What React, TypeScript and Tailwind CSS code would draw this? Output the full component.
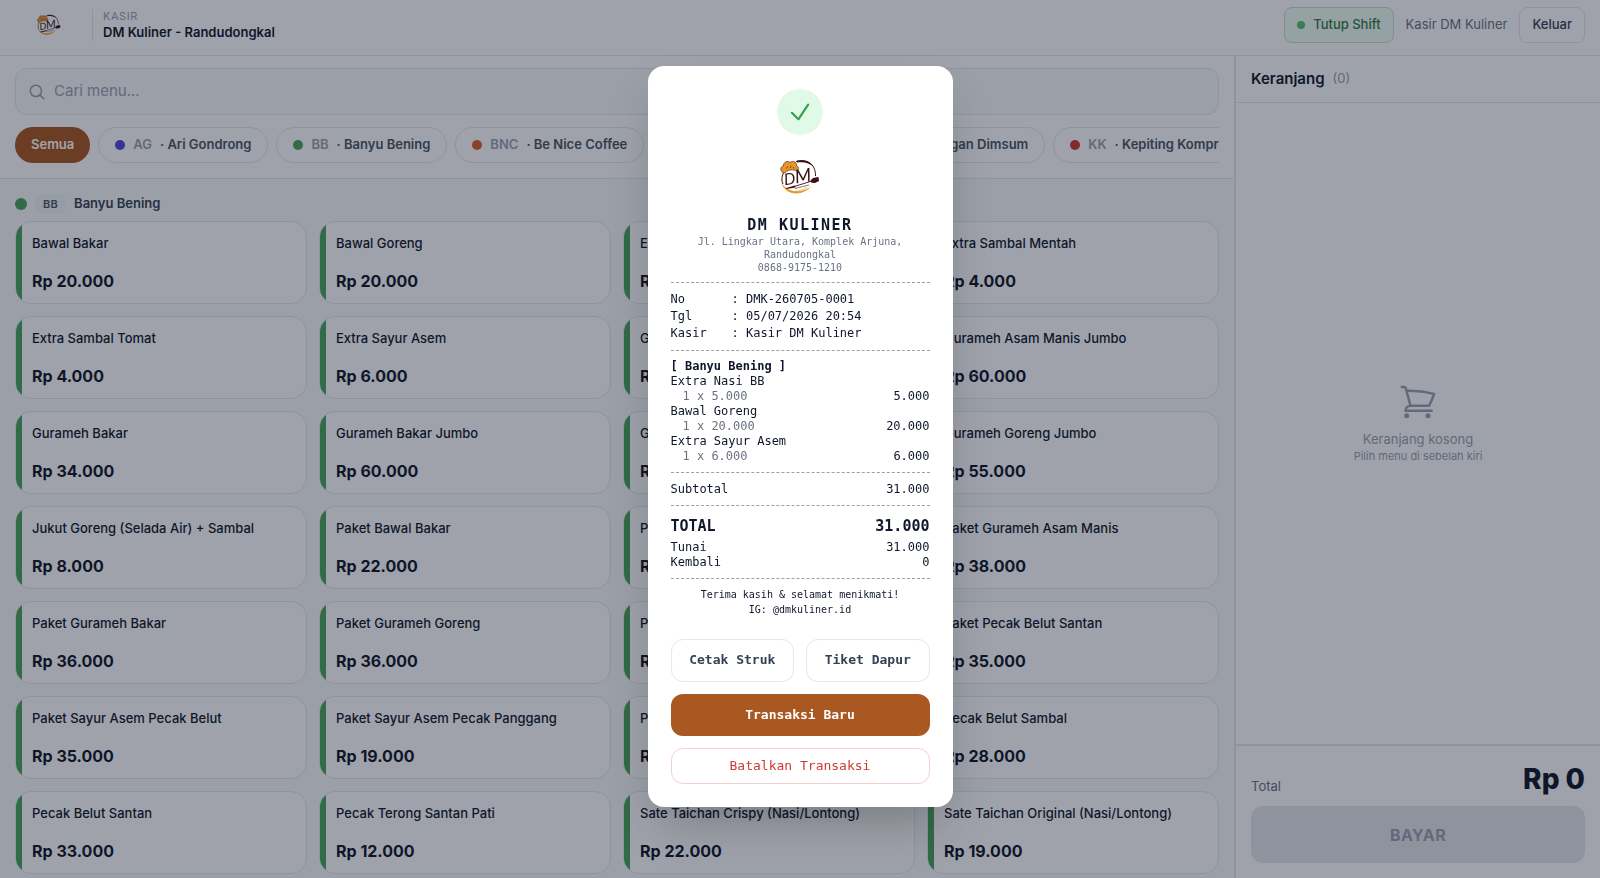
import { HiOutlineCheck, HiOutlineMagnifyingGlass, HiOutlineShoppingCart } from 'react-icons/hi2'
import clsx from 'clsx'

const tenants = [
  { code: 'AG', name: 'Ari Gondrong', dot: 'bg-[#4f46e5]' },
  { code: 'BB', name: 'Banyu Bening', dot: 'bg-[#4aa35a]' },
  { code: 'BNC', name: 'Be Nice Coffee', dot: 'bg-[#d9622b]' },
  { code: 'DK', name: 'Dapur Kuliner Ibu', dot: 'bg-teal-600' },
  { code: 'JD', name: 'Juragan Dimsum', dot: 'bg-amber-600' },
  { code: 'KK', name: 'Kepiting Kompret', dot: 'bg-[#cb3a33]' },
]

const menu = [
  ['Bawal Bakar', '20.000'],
  ['Bawal Goreng', '20.000'],
  ['Extra Nasi BB', '5.000'],
  ['Extra Sambal Mentah', '4.000'],
  ['Extra Sambal Tomat', '4.000'],
  ['Extra Sayur Asem', '6.000'],
  ['Gurameh Asam Manis', '36.000'],
  ['Gurameh Asam Manis Jumbo', '60.000'],
  ['Gurameh Bakar', '34.000'],
  ['Gurameh Bakar Jumbo', '60.000'],
  ['Gurameh Goreng', '34.000'],
  ['Gurameh Goreng Jumbo', '55.000'],
  ['Jukut Goreng (Selada Air) + Sambal', '8.000'],
  ['Paket Bawal Bakar', '22.000'],
  ['Paket Bawal Goreng', '22.000'],
  ['Paket Gurameh Asam Manis', '38.000'],
  ['Paket Gurameh Bakar', '36.000'],
  ['Paket Gurameh Goreng', '36.000'],
  ['Paket Pecak Belut', '35.000'],
  ['Paket Pecak Belut Santan', '35.000'],
  ['Paket Sayur Asem Pecak Belut', '35.000'],
  ['Paket Sayur Asem Pecak Panggang', '19.000'],
  ['Pecak Belut', '28.000'],
  ['Pecak Belut Sambal', '28.000'],
  ['Pecak Belut Santan', '33.000'],
  ['Pecak Terong Santan Pati', '12.000'],
  ['Sate Taichan Crispy (Nasi/Lontong)', '22.000'],
  ['Sate Taichan Original (Nasi/Lontong)', '19.000'],
]

const info = [
  ['No', 'DMK-260705-0001'],
  ['Tgl', '05/07/2026 20:54'],
  ['Kasir', 'Kasir DM Kuliner'],
]

const items = [
  { name: 'Extra Nasi BB', qty: '1 x 5.000', total: '5.000' },
  { name: 'Bawal Goreng', qty: '1 x 20.000', total: '20.000' },
  { name: 'Extra Sayur Asem', qty: '1 x 6.000', total: '6.000' },
]

const Logo = ({ className }: { className?: string }) => (
  <svg viewBox="0 0 40 36" className={className} role="img" aria-label="DM Kuliner">
    <path d="M16 2.5C25 -0.5 36 4 35.5 17" fill="none" stroke="#3b1210" strokeWidth="1" />
    <path d="M17 1.8C23 0.2 30 1.4 34 8C29 3.4 23 2.4 17 3.6z" fill="#3b1210" />
    <path d="M3.4 14C1.4 18 1.4 22 3 25" fill="none" stroke="#3b1210" strokeWidth="1" />
    <path d="M1.5 24C5 37 24 38 32 26C25 34 9 35.5 1.5 24z" fill="#e69a2e" />
    <path d="M15 32.5C20 32 24 30.5 27 28.5" fill="none" stroke="#e69a2e" strokeWidth="0.7" />
    <path
      d="M3 13.5C0 12 0 7.5 3.5 7C3 3 8 1.2 10 3.5C13 1 17.5 3.5 16.6 7C19.5 8 18.6 12 15.6 11.6C12 10 7 11 4.6 14z"
      fill="#e8962a"
      stroke="#5a2a10"
      strokeWidth="0.7"
    />
    <path d="M6.5 9.5l1.2-2M10.5 9l0.4-2.2M14 9.6l-0.8-1.8" stroke="#5a2a10" strokeWidth="0.7" />
    <g fill="#3b1210" fontStyle="italic" fontFamily="Lato, sans-serif" transform="rotate(-8 6 27)">
      <text x="5" y="26" fontSize="16">
        D
      </text>
      <text x="16" y="26" fontSize="19">
        M
      </text>
    </g>
    <path d="M6 29L15 26.6L15.4 28.4L6.4 30z" fill="#3b1210" />
    <path d="M14 27.6L32 22" stroke="#3b1210" strokeWidth="0.9" />
    <path d="M15 29.5L29 26" stroke="#3b1210" strokeWidth="0.6" />
    <path d="M30.5 21.5L33 19L38.5 18L39 22L35 24L31.5 23.8z" fill="#3b1210" />
  </svg>
)

const Header = () => (
  <header className="flex h-14 shrink-0 items-center border-b border-gray-200 bg-white px-[15px] pb-1.5">
    <div className="flex w-[67px] justify-center">
      <Logo className="size-6" />
    </div>
    <div className="ml-2.5 h-8 border-l border-gray-200" />
    <div className="ml-2.5">
      <p className="text-[11px] leading-[14px] tracking-wider text-gray-400">KASIR</p>
      <h1 className="text-[13px] leading-[18px] font-semibold text-slate-900">DM Kuliner - Randudongkal</h1>
    </div>
    <div className="ml-auto flex items-center gap-3 text-[13px]">
      <button className="flex h-9 items-center gap-2 rounded-lg border border-[#bbe5c8] bg-green-50 px-3 font-medium text-[#2f7d43]">
        <span className="size-2 rounded-full bg-[#55c169]" />
        Tutup Shift
      </button>
      <span className="text-gray-500">Kasir DM Kuliner</span>
      <button className="h-9 rounded-lg border border-gray-200 px-3 font-medium text-gray-700">Keluar</button>
    </div>
  </header>
)

const Filters = () => (
  <div className="border-b border-gray-200 bg-white px-[15px] pt-3 pb-[15px]">
    <label className="flex h-[47px] items-center gap-2 rounded-xl border border-gray-200 bg-slate-50 px-3">
      <HiOutlineMagnifyingGlass className="size-[18px] shrink-0 text-gray-400" strokeWidth={2} />
      <input
        type="search"
        aria-label="Cari menu"
        placeholder="Cari menu..."
        className="w-full bg-transparent text-[15px] outline-none placeholder:text-gray-400"
      />
    </label>
    <div className="mt-3 flex gap-2 overflow-hidden text-[13px] font-semibold">
      <button className="h-9 shrink-0 rounded-full bg-[#a85820] px-4 text-white">Semua</button>
      {tenants.map((tenant) => (
        <button
          key={tenant.code}
          className="flex h-9 shrink-0 items-center gap-2 rounded-full border border-gray-200 px-4 text-gray-600"
        >
          <span className={clsx('size-2.5 rounded-full', tenant.dot)} />
          <span className="text-gray-400">{tenant.code}</span>
          <span>· {tenant.name}</span>
        </button>
      ))}
    </div>
  </div>
)

const MenuCard = ({ name, price }: { name: string; price: string }) => (
  <button className="flex h-[83px] overflow-hidden rounded-2xl border border-gray-200 bg-white text-left text-slate-900">
    <span className="h-full w-1.5 shrink-0 bg-[#4aa35a]" />
    <span className="flex h-full flex-col justify-between px-2.5 py-3">
      <span className="text-[13px] leading-[18px] font-medium">{name}</span>
      <span className="text-base leading-5 font-bold">Rp {price}</span>
    </span>
  </button>
)

const Cart = () => (
  <aside className="flex w-[366px] shrink-0 flex-col border-l-2 border-gray-200 bg-white">
    <div className="flex h-[47px] items-center gap-2 border-b border-gray-200 px-[15px]">
      <h2 className="text-[15px] font-semibold text-slate-900">Keranjang</h2>
      <span className="text-[13px] text-gray-400">(0)</span>
    </div>
    <div className="flex flex-1 flex-col items-center justify-center pb-0.5 text-gray-400">
      <HiOutlineShoppingCart className="mb-2 size-10" />
      <p className="text-[13px] leading-[18px]">Keranjang kosong</p>
      <p className="text-[11px] leading-4">Pilih menu di sebelah kiri</p>
    </div>
    <div className="border-t-2 border-gray-200 px-[15px] pt-3 pb-[15px]">
      <div className="flex items-end justify-between">
        <span className="pb-1 text-[13px] text-gray-500">Total</span>
        <span className="text-[28px] leading-[42px] font-extrabold text-slate-900">Rp 0</span>
      </div>
      <button disabled className="mt-1.5 h-[57px] w-full rounded-xl bg-gray-200 text-base font-bold tracking-wide text-gray-400">
        BAYAR
      </button>
    </div>
  </aside>
)

const Divider = () => <hr className="my-2 border-t border-dashed border-gray-400" />

const Row = ({ label, value }: { label: string; value: string }) => (
  <div className="flex justify-between">
    <span>{label}</span>
    <span>{value}</span>
  </div>
)

const Receipt = () => (
  <div
    role="dialog"
    aria-modal="true"
    aria-label="Struk transaksi"
    className="w-[305px] rounded-2xl bg-white p-[23px] font-['DejaVu_Sans_Mono',monospace] text-xs text-slate-900 shadow-2xl"
  >
    <div className="mx-auto flex size-[46px] items-center justify-center rounded-full bg-[#e1fae7]">
      <HiOutlineCheck className="size-[26px] text-[#36a04f]" strokeWidth={2} />
    </div>
    <Logo className="mx-auto mt-6 h-9 w-10" />
    <div className="mt-5 text-center">
      <h2 className="text-[15px] leading-5 font-bold tracking-widest">DM KULINER</h2>
      <p className="text-[10px] leading-[13px] text-gray-500">
        Jl. Lingkar Utara, Komplek Arjuna, Randudongkal
        <br />
        0868-9175-1210
      </p>
    </div>
    <Divider />
    <dl className="leading-[17px]">
      {info.map(([label, value]) => (
        <div key={label} className="flex">
          <dt className="w-[61px]">{label}</dt>
          <dd>: {value}</dd>
        </div>
      ))}
    </dl>
    <Divider />
    <div className="leading-[15px]">
      <p className="font-bold">[ Banyu Bening ]</p>
      {items.map((item) => (
        <div key={item.name}>
          <p>{item.name}</p>
          <div className="flex justify-between">
            <span className="pl-3 text-gray-500">{item.qty}</span>
            <span>{item.total}</span>
          </div>
        </div>
      ))}
    </div>
    <Divider />
    <Row label="Subtotal" value="31.000" />
    <Divider />
    <div className="text-[15px] leading-6 font-bold">
      <Row label="TOTAL" value="31.000" />
    </div>
    <div className="mt-0.5 leading-[15px]">
      <Row label="Tunai" value="31.000" />
      <Row label="Kembali" value="0" />
    </div>
    <Divider />
    <p className="text-center text-[10px] leading-[15px]">
      Terima kasih &amp; selamat menikmati!
      <br />
      IG: @dmkuliner.id
    </p>
    <div className="mt-[22px] grid grid-cols-2 gap-3 text-[13px]">
      <button className="h-[43px] rounded-xl border border-gray-200 font-bold text-gray-700">Cetak Struk</button>
      <button className="h-[43px] rounded-xl border border-gray-200 font-bold text-gray-700">Tiket Dapur</button>
      <button className="col-span-2 h-[42px] rounded-xl bg-[#a85820] font-bold text-white">Transaksi Baru</button>
      <button className="col-span-2 h-9 rounded-xl border border-[#f6cfcf] text-[#cb3c38]">
        Batalkan Transaksi
      </button>
    </div>
  </div>
)

const App = () => {
  return (
    <div className="flex h-screen flex-col overflow-hidden bg-slate-50 font-[Inter,sans-serif]">
      <Header />
      <div className="flex min-h-0 flex-1">
        <main className="flex min-w-0 flex-1 flex-col">
          <Filters />
          <section className="min-h-0 flex-1 overflow-hidden px-[15px] pt-3">
            <div className="flex h-[26px] items-center gap-2">
              <span className="size-3 rounded-full bg-[#4aa35a]" />
              <span className="rounded-md bg-slate-100 px-2 py-0.5 text-[11px] font-semibold tracking-wide text-gray-600">
                BB
              </span>
              <h2 className="text-[13px] font-semibold text-gray-700">Banyu Bening</h2>
            </div>
            <div className="mt-1 grid grid-cols-4 gap-3">
              {menu.map(([name, price]) => (
                <MenuCard key={name} name={name} price={price} />
              ))}
            </div>
          </section>
        </main>
        <Cart />
      </div>
      <div className="fixed inset-0 flex items-center justify-center bg-slate-900/40 pb-1.5">
        <Receipt />
      </div>
    </div>
  )
}

export default App
